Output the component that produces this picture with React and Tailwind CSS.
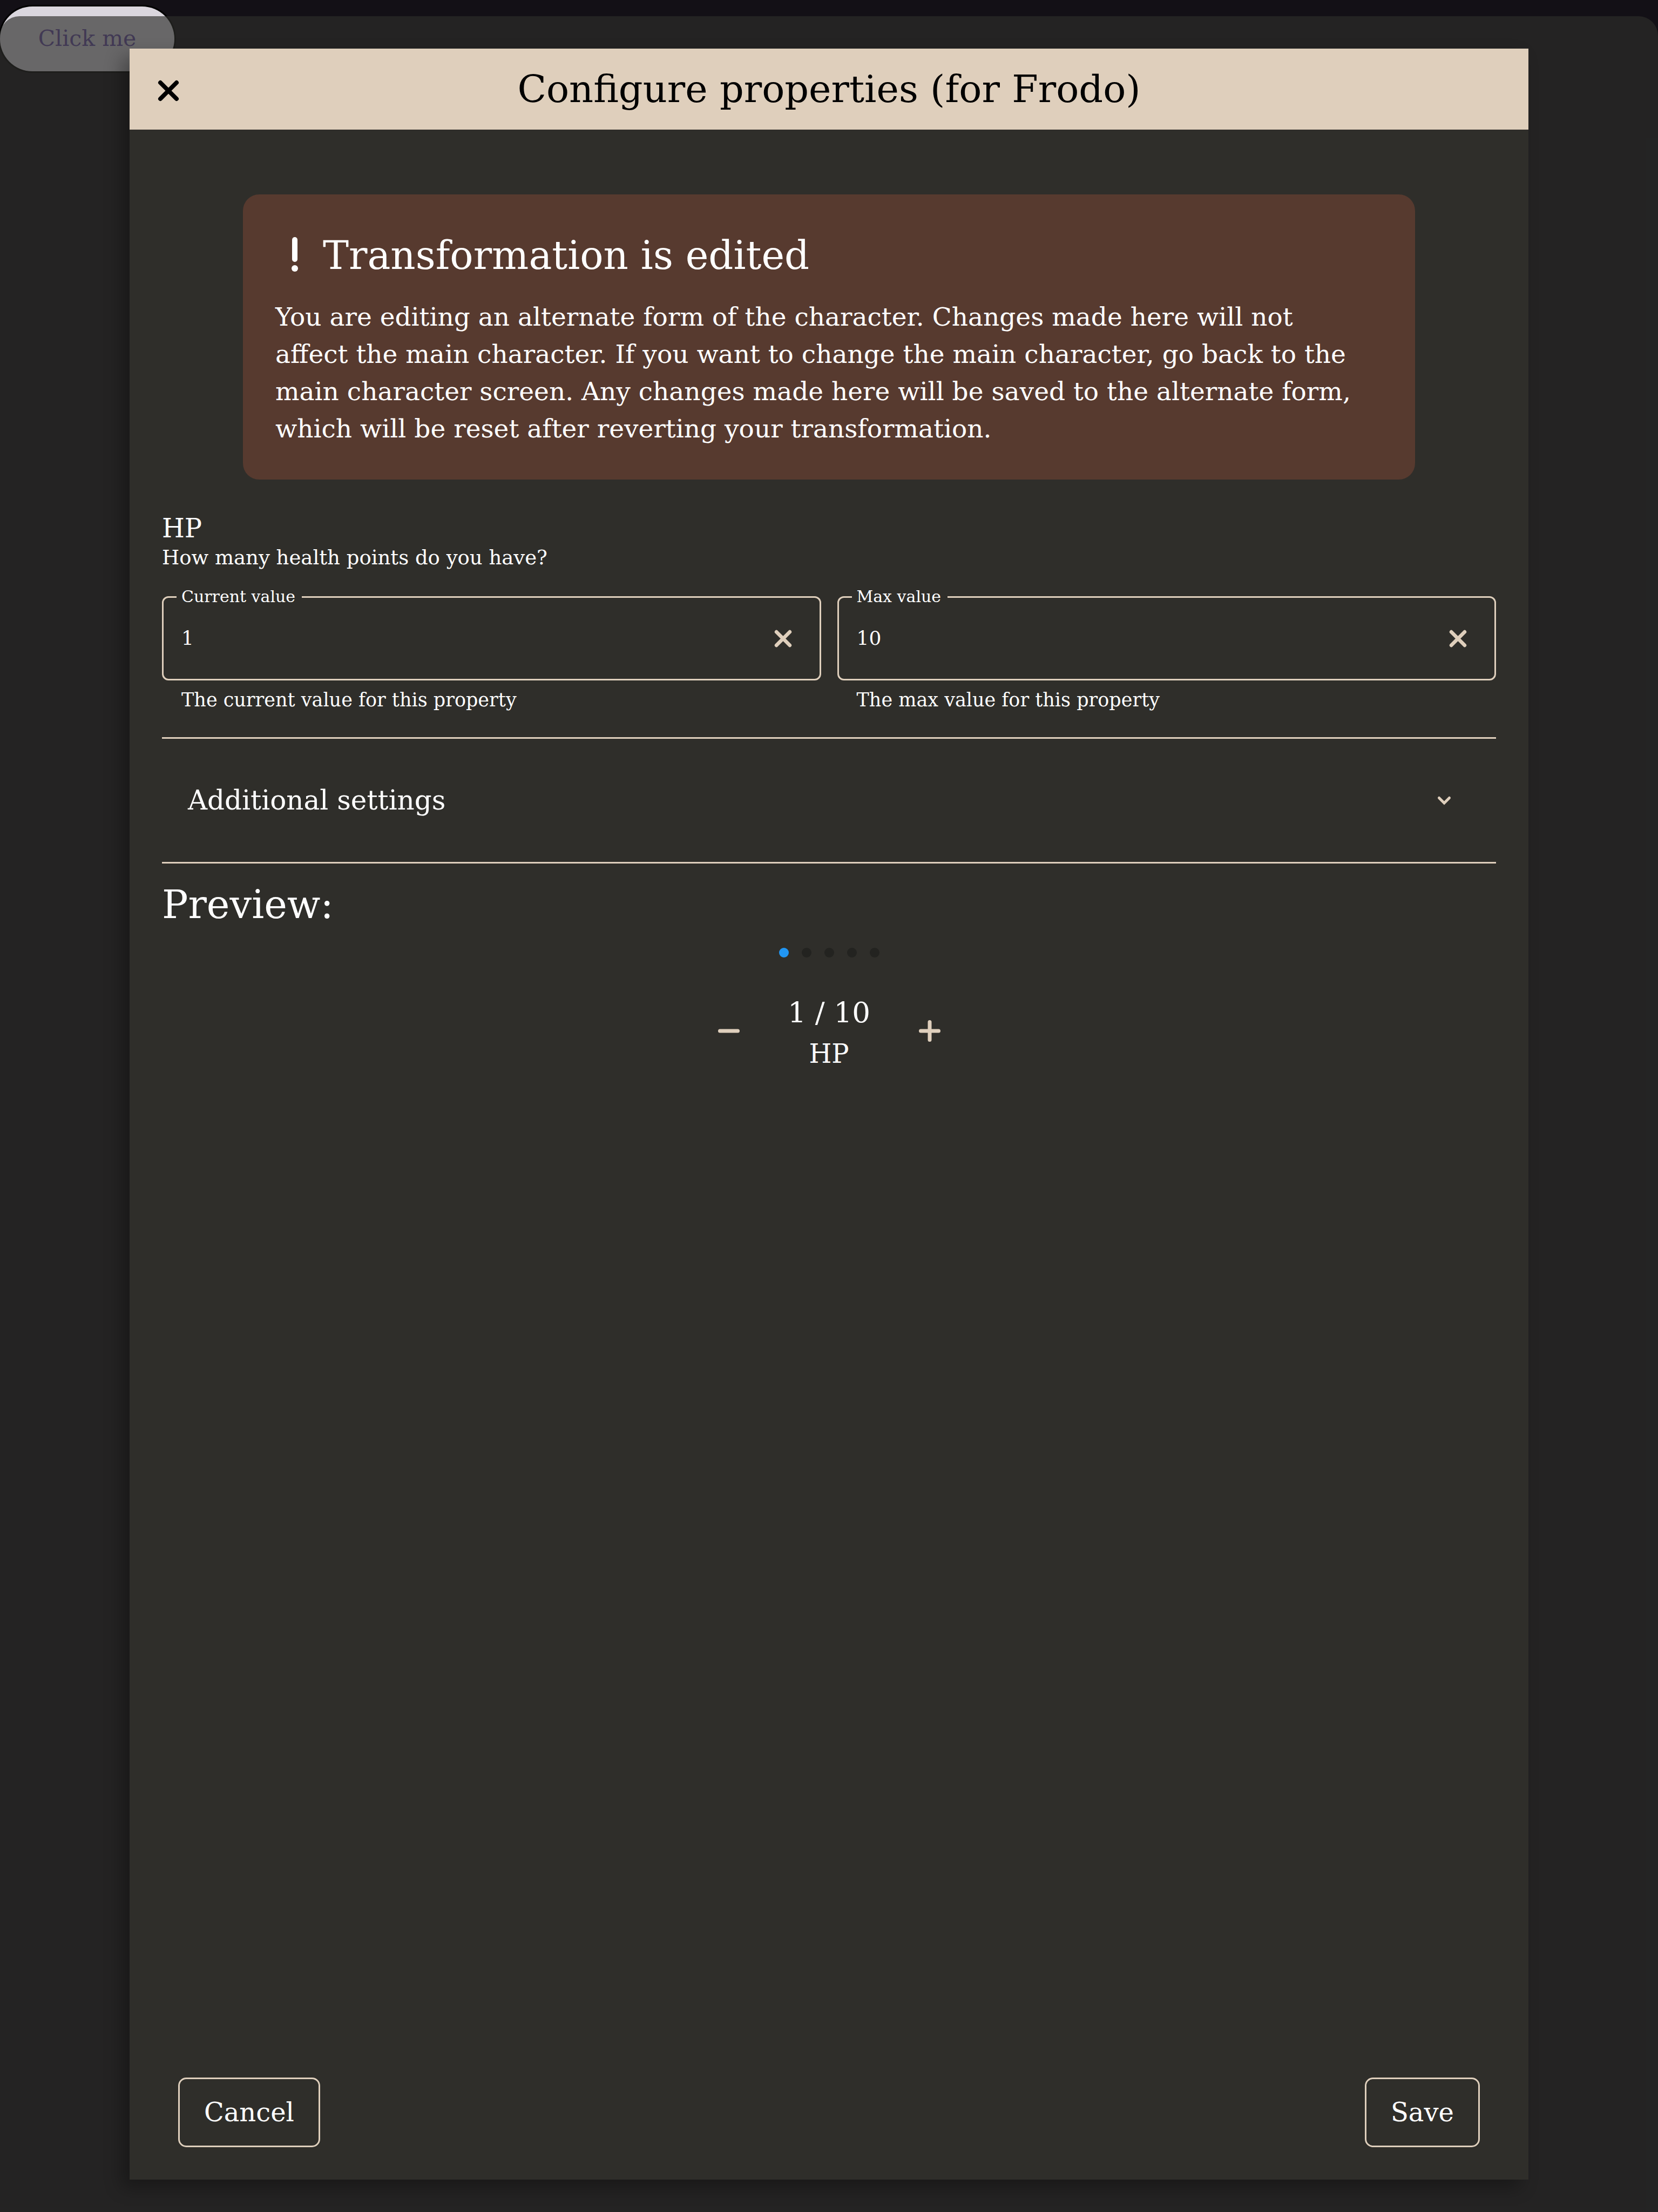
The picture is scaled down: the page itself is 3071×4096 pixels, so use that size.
import { useState } from "react";

function Cross({ className }) {
  return (
    <svg viewBox="0 0 40 40" fill="none" stroke="currentColor" strokeWidth="8" strokeLinecap="round" className={className} aria-hidden="true">
      <path d="M5 5 35 35M35 5 5 35" />
    </svg>
  );
}

function NumberField({ id, label, helper, value, onChange }) {
  return (
    <div className="min-w-0 flex-1">
      <div className="relative flex h-[156px] items-center rounded-[12px] border-[3px] border-[#dfcfbc] pr-[51px] pl-[33px]">
        <label htmlFor={id} className="absolute -top-[22px] left-[24px] bg-[#2f2e2a] pr-[12px] pl-[9px] text-[30px] leading-[40px]">
          {label}
        </label>
        <input
          id={id}
          type="text"
          inputMode="numeric"
          value={value}
          onChange={(e) => onChange(e.target.value)}
          aria-describedby={id + "-helper"}
          className="min-w-0 flex-1 bg-transparent text-[36px] leading-[60px] outline-none"
        />
        <button type="button" aria-label={"Clear " + label} onClick={() => onChange("")} className="text-[#dfcfbc]">
          <Cross className="size-[33px]" />
        </button>
      </div>
      <p id={id + "-helper"} className="mt-[12px] pl-[36px] text-[35px] leading-[48px]">
        {helper}
      </p>
    </div>
  );
}

export default function App() {
  const [current, setCurrent] = useState("1");
  const [max, setMax] = useState("10");

  return (
    <div className="relative flex h-screen flex-col bg-[#131016] font-['DejaVu_Serif',serif] text-white">
      <button type="button" className="absolute top-[12px] left-0 h-[120px] w-[323px] rounded-full bg-[#dad6de] text-[41px] text-[#6750a4] shadow-[0_0_0_3px_#000]">
        Click me
      </button>

      <div className="relative mt-[30px] flex min-h-0 flex-1 flex-col rounded-t-[36px] bg-[#2d2e2b]/66 px-[240px] pt-[60px] pb-[60px]">
        <section role="dialog" aria-labelledby="title" className="flex min-h-0 flex-1 flex-col bg-[#2f2e2a] shadow-[-15px_15px_30px_rgba(0,0,0,0.3)]">
          <header className="grid h-[150px] shrink-0 grid-cols-[150px_1fr_150px] items-center bg-[#dfcfbc] text-black">
            <button type="button" aria-label="Close" className="mt-[6px] ml-[52px] justify-self-start">
              <Cross className="size-[40px]" />
            </button>
            <h1 id="title" className="text-center text-[70px] leading-[148px]">
              Configure properties (for Frodo)
            </h1>
          </header>

          <div className="flex min-h-0 flex-1 flex-col px-[60px] pt-[120px] pb-[60px]">
            <div className="mx-[150px] rounded-[30px] bg-[#573a2f] p-[60px]">
              <h2 className="mb-[26px] flex items-center text-[72px] leading-[106px]">
                <svg viewBox="0 0 88 72" className="h-[72px] w-[88px]" fill="currentColor" aria-hidden="true">
                  <rect x="31" y="2" width="10" height="46" rx="5" />
                  <circle cx="36" cy="60" r="6" />
                </svg>
                Transformation is edited
              </h2>
              <p className="pr-[30px] text-[47px] leading-[69px]">
                You are editing an alternate form of the character. Changes made here will not affect the main
                character. If you want to change the main character, go back to the main character screen. Any
                changes made here will be saved to the alternate form, which will be reset after reverting your
                transformation.
              </p>
            </div>

            <h3 className="mt-[60px] text-[48px] leading-[60px]">HP</h3>
            <p className="text-[37px] leading-[50px]">How many health points do you have?</p>

            <div className="mt-[46px] flex gap-[30px]">
              <NumberField id="current" label="Current value" helper="The current value for this property" value={current} onChange={setCurrent} />
              <NumberField id="max" label="Max value" helper="The max value for this property" value={max} onChange={setMax} />
            </div>

            <button type="button" aria-expanded="false" className="mt-[45px] flex h-[234px] shrink-0 items-center justify-between border-y-[3px] border-[#dfcfbc] pr-[78px] pl-[48px] text-[50px]">
              Additional settings
              <svg viewBox="0 0 36 36" fill="none" stroke="#dfcfbc" strokeWidth="5" strokeLinecap="round" className="size-[36px]" aria-hidden="true">
                <path d="m8.500 13.500 9.500 9.500 9.500-9.500" />
              </svg>
            </button>

            <h2 className="mt-[24px] text-[72px] leading-[104px]">Preview:</h2>

            <div className="mt-[28px] flex justify-center gap-[24px]">
              <span className="size-[18px] rounded-full bg-[#2196f3]" />
              <span className="size-[18px] rounded-full bg-[#232320]" />
              <span className="size-[18px] rounded-full bg-[#232320]" />
              <span className="size-[18px] rounded-full bg-[#232320]" />
              <span className="size-[18px] rounded-full bg-[#232320]" />
            </div>

            <div className="mt-[60px] flex items-center justify-center text-center">
              <button type="button" aria-label="Decrease" className="flex size-[120px] items-center justify-center">
                <svg viewBox="0 0 40 40" fill="none" stroke="#dfcfbc" strokeWidth="7" strokeLinecap="round" className="size-[40px]" aria-hidden="true">
                  <path d="M3.500 20h33" />
                </svg>
              </button>
              <div className="w-[252px]">
                <p className="text-[53px] leading-[84px]">1 / 10</p>
                <p className="text-[48px] leading-[68px]">HP</p>
              </div>
              <button type="button" aria-label="Increase" className="flex size-[120px] items-center justify-center">
                <svg viewBox="0 0 40 40" fill="none" stroke="#dfcfbc" strokeWidth="7" strokeLinecap="round" className="size-[40px]" aria-hidden="true">
                  <path d="M3.500 20h33M20 3.500v33" />
                </svg>
              </button>
            </div>

            <footer className="mt-auto flex justify-between px-[30px]">
              <button type="button" className="rounded-[15px] border-[3px] border-[#dfcfbc] px-[45px] text-[48px] leading-[123px]">
                Cancel
              </button>
              <button type="button" className="rounded-[15px] border-[3px] border-[#dfcfbc] px-[45px] text-[48px] leading-[123px]">
                Save
              </button>
            </footer>
          </div>
        </section>
      </div>
    </div>
  );
}
